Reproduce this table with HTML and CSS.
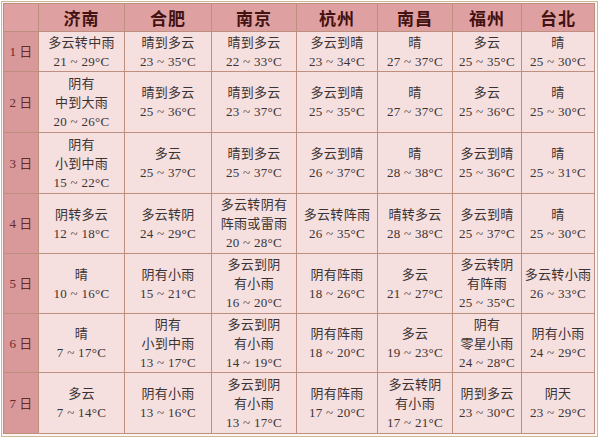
FILE: index.html
```html
<!DOCTYPE html>
<html lang="zh">
<head>
<meta charset="utf-8">
<title>天气预报</title>
<link rel="stylesheet" href="styles.css">
</head>
<body>
<div class="frame">
<table class="wx">
<colgroup>
<col class="c-day"><col class="c1"><col class="c2"><col class="c3"><col class="c4"><col class="c5"><col class="c6"><col class="c7">
</colgroup>
<thead>
<tr class="r-head"><th class="corner"></th><th>济南</th><th>合肥</th><th>南京</th><th>杭州</th><th>南昌</th><th>福州</th><th>台北</th></tr>
</thead>
<tbody>
<tr class="r1"><th class="day">1 日</th>
<td>多云转中雨<br>21 ~ 29°C</td><td>晴到多云<br>23 ~ 35°C</td><td>晴到多云<br>22 ~ 33°C</td><td>多云到晴<br>23 ~ 34°C</td><td>晴<br>27 ~ 37°C</td><td>多云<br>25 ~ 35°C</td><td>晴<br>25 ~ 30°C</td></tr>
<tr class="r2"><th class="day">2 日</th>
<td>阴有<br>中到大雨<br>20 ~ 26°C</td><td>晴到多云<br>25 ~ 36°C</td><td>晴到多云<br>23 ~ 37°C</td><td>多云到晴<br>25 ~ 35°C</td><td>晴<br>27 ~ 37°C</td><td>多云<br>25 ~ 36°C</td><td>晴<br>25 ~ 30°C</td></tr>
<tr class="r3"><th class="day">3 日</th>
<td>阴有<br>小到中雨<br>15 ~ 22°C</td><td>多云<br>25 ~ 37°C</td><td>晴到多云<br>25 ~ 37°C</td><td>多云到晴<br>26 ~ 37°C</td><td>晴<br>28 ~ 38°C</td><td>多云到晴<br>25 ~ 36°C</td><td>晴<br>25 ~ 31°C</td></tr>
<tr class="r4"><th class="day">4 日</th>
<td>阴转多云<br>12 ~ 18°C</td><td>多云转阴<br>24 ~ 29°C</td><td>多云转阴有<br>阵雨或雷雨<br>20 ~ 28°C</td><td>多云转阵雨<br>26 ~ 35°C</td><td>晴转多云<br>28 ~ 38°C</td><td>多云到晴<br>25 ~ 37°C</td><td>晴<br>25 ~ 30°C</td></tr>
<tr class="r5"><th class="day">5 日</th>
<td>晴<br>10 ~ 16°C</td><td>阴有小雨<br>15 ~ 21°C</td><td>多云到阴<br>有小雨<br>16 ~ 20°C</td><td>阴有阵雨<br>18 ~ 26°C</td><td>多云<br>21 ~ 27°C</td><td>多云转阴<br>有阵雨<br>25 ~ 35°C</td><td>多云转小雨<br>26 ~ 33°C</td></tr>
<tr class="r6"><th class="day">6 日</th>
<td>晴<br>7 ~ 17°C</td><td>阴有<br>小到中雨<br>13 ~ 17°C</td><td>多云到阴<br>有小雨<br>14 ~ 19°C</td><td>阴有阵雨<br>18 ~ 20°C</td><td>多云<br>19 ~ 23°C</td><td>阴有<br>零星小雨<br>24 ~ 28°C</td><td>阴有小雨<br>24 ~ 29°C</td></tr>
<tr class="r7"><th class="day">7 日</th>
<td>多云<br>7 ~ 14°C</td><td>阴有小雨<br>13 ~ 16°C</td><td>多云到阴<br>有小雨<br>13 ~ 17°C</td><td>阴有阵雨<br>17 ~ 20°C</td><td>多云转阴<br>有小雨<br>17 ~ 21°C</td><td>阴到多云<br>23 ~ 30°C</td><td>阴天<br>23 ~ 29°C</td></tr>
</tbody>
</table>
</div>
</body>
</html>
```
FILE: styles.css
```css
html, body {
  margin: 0;
  padding: 0;
  background: #ffffff;
}
.frame {
  width: 591px;
  margin: 1px 0 0 1px;
  padding: 1px 3px 2px 1px;
  border: 1px solid #cdb893;
  background: #fbf6f2;
}
.wx {
  width: 591px;
  table-layout: fixed;
  border-collapse: collapse;
  font-family: "Liberation Serif", "Noto Sans CJK SC", serif;
  font-size: 13px;
  line-height: 19px;
  color: #3a3434;
}
.c-day { width: 35px; }
.c1 { width: 86px; }
.c2 { width: 87px; }
.c3 { width: 85px; }
.c4 { width: 81px; }
.c5 { width: 75px; }
.c6 { width: 69px; }
.c7 { width: 73px; }
.wx th, .wx td {
  border: 1px solid #bc8f7f;
  padding: 0;
  text-align: center;
  vertical-align: middle;
}
.wx td {
  background: #f6dfdf;
  letter-spacing: 0.3px;
}
.r-head th {
  background: #dfa0a1;
  font-family: "Noto Sans CJK SC", sans-serif;
  font-weight: bold;
  font-size: 17px;
  line-height: 20px;
  color: #431212;
  letter-spacing: 1px;
}
.wx .day {
  background: #d9999b;
  font-weight: normal;
  font-size: 13px;
  color: #6a2a2a;
}
.r-head { height: 28px; }
.r1 { height: 40px; }
.r2 { height: 61px; }
.r3 { height: 61px; }
.r4 { height: 60px; }
.r5 { height: 60px; }
.r6 { height: 59px; }
.r7 { height: 61px; }
```
